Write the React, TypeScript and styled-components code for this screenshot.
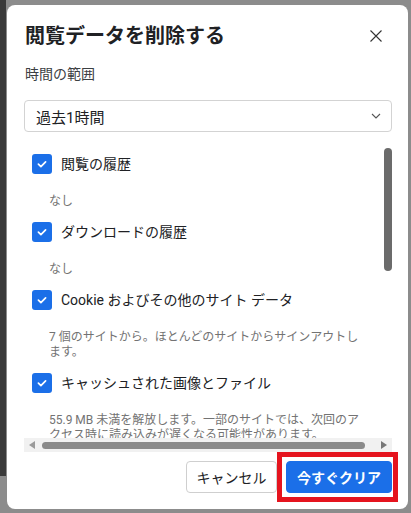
import styled, { createGlobalStyle } from 'styled-components';

const GlobalStyle = createGlobalStyle`
  html, body {
    margin: 0;
    padding: 0;
    background: #8c8c8c;
  }
  * {
    box-sizing: border-box;
  }
`;

const Page = styled.div`
  width: 411px;
  height: 513px;
  padding: 5px 3px 4px 7px;
  background: linear-gradient(#3a3a3a, #3a3a3a) no-repeat 0 0 / 6px 476px, #8c8c8c;
  font-family: Roboto, "Noto Sans CJK JP", sans-serif;
`;

const Dialog = styled.div`
  width: 401px;
  height: 504px;
  background: #fff;
  border-radius: 8px;
  display: flex;
  flex-direction: column;
`;

const Header = styled.div`
  display: flex;
  align-items: center;
  justify-content: space-between;
  padding: 17px 20px 0 18px;
`;

const Title = styled.h1`
  margin: 0;
  font-size: 20px;
  line-height: 28px;
  font-weight: 700;
  color: #202124;
`;

const CloseButton = styled.button`
  width: 24px;
  height: 24px;
  padding: 0;
  border: none;
  background: transparent;
  display: flex;
  align-items: center;
  justify-content: center;
`;

const FieldLabel = styled.div`
  margin: 14px 0 0 18px;
  font-size: 14px;
  line-height: 20px;
  color: #3c4043;
`;

const Select = styled.div`
  margin: 16px 16px 0 17px;
  height: 32px;
  border: 1px solid #d3d3d3;
  border-radius: 4px;
  display: flex;
  align-items: center;
  justify-content: space-between;
  padding: 0 10px 0 11px;
  font-size: 15px;
  color: #202124;
`;

const ScrollBox = styled.div`
  margin: 8px 16px 0 17px;
  display: grid;
  grid-template-columns: 1fr 8px;
  grid-template-rows: 298px 14px;
`;

const Content = styled.div`
  overflow: hidden;
  padding: 14px 0 0 8px;
`;

const VTrack = styled.div`
  padding-top: 8px;
`;

const VThumb = styled.div`
  width: 8px;
  height: 123px;
  border-radius: 4px;
  background: #6b6b6b;
`;

const HTrack = styled.div`
  grid-column: 1 / -1;
  background: #f1f1f1;
  display: flex;
  align-items: center;
  padding: 0 5px;
`;

const HThumb = styled.div`
  margin-left: 7px;
  width: 323px;
  height: 7px;
  border-radius: 4px;
  background: #8a8a8a;
`;

const Spacer = styled.div`
  flex: 1;
`;

const Item = styled.div`
  & + & {
    margin-top: 13px;
  }
`;

const Row = styled.label`
  display: flex;
  align-items: center;
  gap: 9px;
  height: 20px;
  font-size: 14px;
  line-height: 20px;
  color: #202124;
  white-space: nowrap;
`;

const Box = styled.span`
  width: 20px;
  height: 20px;
  border-radius: 3px;
  background: #1b6fe8;
  display: flex;
  align-items: center;
  justify-content: center;
  flex: none;
`;

const Desc = styled.div`
  margin: 20px 0 0 17px;
  width: 316px;
  font-size: 12px;
  line-height: 15px;
  color: #737373;
`;

const Footer = styled.div`
  margin-top: 9px;
  padding-right: 16px;
  display: flex;
  justify-content: flex-end;
  gap: 9px;
`;

const Button = styled.button<{ $primary?: boolean }>`
  height: 32px;
  padding: 0;
  white-space: nowrap;
  border-radius: 4px;
  font-family: inherit;
  font-size: 14px;
  font-weight: ${(p) => (p.$primary ? 600 : 400)};
  border: 1px solid ${(p) => (p.$primary ? '#1b6fe8' : '#cfcfcf')};
  background: ${(p) => (p.$primary ? '#1b6fe8' : '#fff')};
  color: ${(p) => (p.$primary ? '#fff' : '#202124')};
  width: ${(p) => (p.$primary ? '106px' : '91px')};
`;

const Highlight = styled.div`
  position: relative;
  &::after {
    content: '';
    position: absolute;
    top: -9px;
    left: -9px;
    right: -6px;
    bottom: -9px;
    border: 5px solid #e5141e;
    pointer-events: none;
  }
`;

const items = [
  { label: '閲覧の履歴', desc: 'なし' },
  { label: 'ダウンロードの履歴', desc: 'なし' },
  { label: 'Cookie およびその他のサイト データ', desc: '7 個のサイトから。ほとんどのサイトからサインアウトします。' },
  { label: 'キャッシュされた画像とファイル', desc: '55.9 MB 未満を解放します。一部のサイトでは、次回のアクセス時に読み込みが遅くなる可能性があります。' },
];

const Check = () => (
  <Box>
    <svg width="20" height="20" viewBox="0 0 20 20">
      <path d="M6.4 10.2 L8.9 12.6 L13.6 7.8" fill="none" stroke="#fff" strokeWidth="1.7" strokeLinecap="round" strokeLinejoin="round" />
    </svg>
  </Box>
);

export default function App() {
  return (
    <>
      <GlobalStyle />
      <Page>
        <Dialog>
          <Header>
            <Title>閲覧データを削除する</Title>
            <CloseButton aria-label="閉じる">
              <svg width="12" height="12" viewBox="0 0 12 12">
                <path d="M0.5 0.5 L11.5 11.5 M11.5 0.5 L0.5 11.5" stroke="#333" strokeWidth="1.1" />
              </svg>
            </CloseButton>
          </Header>
          <FieldLabel>時間の範囲</FieldLabel>
          <Select>
            <span>過去1時間</span>
            <svg width="10" height="6" viewBox="0 0 10 6">
              <path d="M1 1 L5 5 L9 1" fill="none" stroke="#555" strokeWidth="1.1" />
            </svg>
          </Select>
          <ScrollBox>
            <Content>
              {items.map((it) => (
                <Item key={it.label}>
                  <Row>
                    <Check />
                    {it.label}
                  </Row>
                  <Desc>{it.desc}</Desc>
                </Item>
              ))}
            </Content>
            <VTrack>
              <VThumb />
            </VTrack>
            <HTrack>
              <svg width="6" height="8" viewBox="0 0 6 8">
                <path d="M6 0 L0 4 L6 8 Z" fill="#9a9a9a" />
              </svg>
              <HThumb />
              <Spacer />
              <svg width="6" height="8" viewBox="0 0 6 8">
                <path d="M0 0 L6 4 L0 8 Z" fill="#777" />
              </svg>
            </HTrack>
          </ScrollBox>
          <Footer>
            <Button>キャンセル</Button>
            <Highlight>
              <Button $primary>今すぐクリア</Button>
            </Highlight>
          </Footer>
        </Dialog>
      </Page>
    </>
  );
}
